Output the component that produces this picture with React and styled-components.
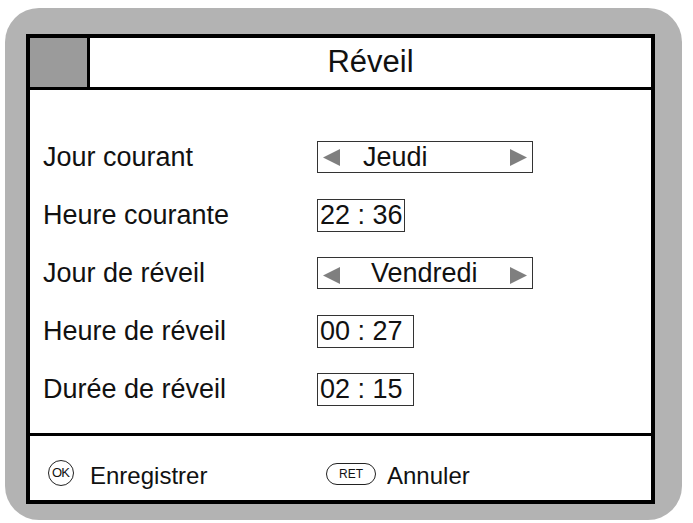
import React from 'react';
import styled, { createGlobalStyle } from 'styled-components';

const Global = createGlobalStyle`
  html, body {
    margin: 0;
    padding: 0;
    background: #ffffff;
  }
  body {
    font-family: "Liberation Sans", Arial, Helvetica, sans-serif;
    color: #111;
  }
`;

const Frame = styled.div`
  box-sizing: border-box;
  width: 677px;
  height: 512px;
  margin: 8px 0 0 5px;
  padding: 26px 27px 16px 21px;
  background: #b3b3b3;
  border-radius: 34px;
`;

const Screen = styled.div`
  box-sizing: border-box;
  height: 100%;
  background: #fff;
  border: 4px solid #000;
  display: flex;
  flex-direction: column;
`;

const Header = styled.div`
  display: flex;
  height: 52px;
  box-sizing: border-box;
  border-bottom: 3px solid #000;
`;

const Swatch = styled.div`
  width: 57px;
  background: #9b9b9b;
  border-right: 3px solid #000;
`;

const Title = styled.h1`
  flex: 1;
  margin: 0;
  font-size: 31px;
  font-weight: normal;
  text-align: center;
  line-height: 48px;
`;

const Body = styled.div`
  flex: 1;
  padding: 38px 0 0 13px;
  border-bottom: 3px solid #000;
`;

const Row = styled.div`
  display: grid;
  grid-template-columns: 274px 1fr;
  align-items: center;
  height: 58px;
  font-size: 27px;
`;

const Label = styled.span`
  line-height: 1;
`;

const Spinner = styled.div`
  box-sizing: border-box;
  width: 216px;
  height: 32px;
  border: 1.5px solid #333;
  display: flex;
  align-items: center;
  padding: 0 5px;
`;

const Value = styled.span`
  flex: 1;
  padding-left: ${(p) => p.$indent}px;
  line-height: 1;
`;

const Arrow = styled.svg`
  width: 17px;
  height: 17px;
  fill: #7f7f7f;
  flex: none;
  margin-top: ${(p) => p.$drop || 0}px;
`;

const TimeBox = styled.div`
  box-sizing: border-box;
  height: 33px;
  justify-self: start;
  border: 1.5px solid #333;
  padding: 0 ${(p) => p.$right}px 0 2px;
  display: flex;
  align-items: center;
  line-height: 1;
`;

const Footer = styled.div`
  height: 64px;
  display: flex;
  align-items: center;
  padding: 15px 0 0 18px;
  box-sizing: border-box;
  font-size: 24px;
`;

const Action = styled.div`
  display: flex;
  align-items: center;
  gap: ${(p) => p.$gap}px;
  width: ${(p) => p.$width || 'auto'};
`;

const OkKey = styled.span`
  box-sizing: border-box;
  width: 26px;
  height: 26px;
  border: 1.5px solid #222;
  border-radius: 50%;
  display: inline-flex;
  align-items: center;
  justify-content: center;
  font-size: 13px;
  letter-spacing: -1px;
  padding-right: 1px;
  margin-top: -6px;
`;

const RetKey = styled.span`
  box-sizing: border-box;
  width: 50px;
  height: 22px;
  border: 1.5px solid #222;
  border-radius: 11px;
  display: inline-flex;
  align-items: center;
  justify-content: center;
  font-size: 12px;
  margin-top: -4px;
`;

const Left = ({ drop }) => (
  <Arrow viewBox="0 0 16 16" $drop={drop}>
    <polygon points="0,8 16,0 16,16" />
  </Arrow>
);

const Right = ({ drop }) => (
  <Arrow viewBox="0 0 16 16" $drop={drop}>
    <polygon points="16,8 0,0 0,16" />
  </Arrow>
);

export default function App() {
  return (
    <>
      <Global />
      <Frame>
        <Screen>
          <Header>
            <Swatch />
            <Title>Réveil</Title>
          </Header>
          <Body>
            <Row>
              <Label>Jour courant</Label>
              <Spinner>
                <Left />
                <Value $indent={23}>Jeudi</Value>
                <Right />
              </Spinner>
            </Row>
            <Row>
              <Label>Heure courante</Label>
              <TimeBox $right={1}>22 : 36</TimeBox>
            </Row>
            <Row>
              <Label>Jour de réveil</Label>
              <Spinner>
                <Left drop={4} />
                <Value $indent={31}>Vendredi</Value>
                <Right drop={4} />
              </Spinner>
            </Row>
            <Row>
              <Label>Heure de réveil</Label>
              <TimeBox $right={10}>00 : 27</TimeBox>
            </Row>
            <Row>
              <Label>Durée de réveil</Label>
              <TimeBox $right={10}>02 : 15</TimeBox>
            </Row>
          </Body>
          <Footer>
            <Action $gap={16} $width="278px">
              <OkKey>OK</OkKey>
              Enregistrer
            </Action>
            <Action $gap={11}>
              <RetKey>RET</RetKey>
              Annuler
            </Action>
          </Footer>
        </Screen>
      </Frame>
    </>
  );
}
